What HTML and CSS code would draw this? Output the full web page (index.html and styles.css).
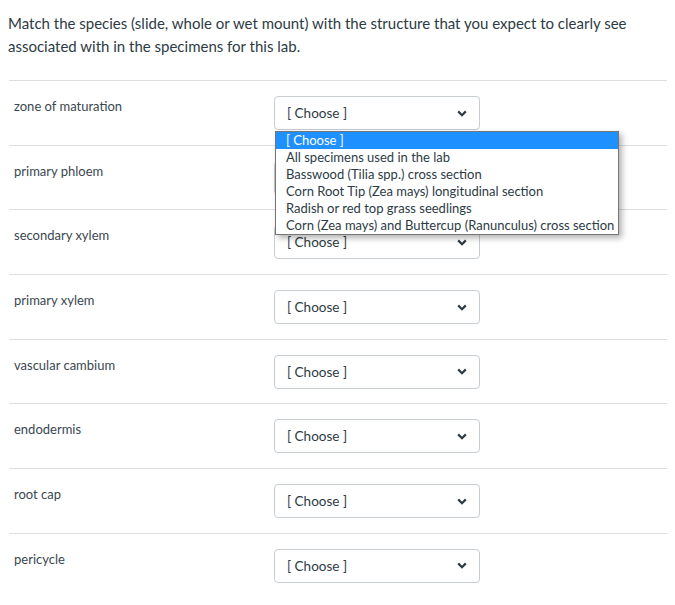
FILE: index.html
```html
<!DOCTYPE html>
<html>
    <head>
        <link rel="stylesheet" href="styles.css">
    </head>
    <body>
        <div class="question">
            <p class="question-text">
                Match the species (slide, whole or wet mount) with the structure that you expect to clearly see
                associated with in the specimens for this lab.
            </p>
            <div class="answers">
                <div class="answer-row">
                    <div class="answer-label">zone of maturation</div>
                    <div class="select-wrap">
                        <div class="select-box">
                            <span>[ Choose ]</span>
                            <svg class="chevron" width="10" height="7" viewBox="0 0 10 7">
                                <path d="M1.2 1.4 L5 5.2 L8.8 1.4" fill="none" stroke="#2d3b45" stroke-width="2.2" />
                            </svg>
                        </div>
                        <ul class="dropdown">
                            <li class="selected">[ Choose ]</li>
                            <li>All specimens used in the lab</li>
                            <li>Basswood (Tilia spp.) cross section</li>
                            <li>Corn Root Tip (Zea mays) longitudinal section</li>
                            <li>Radish or red top grass seedlings</li>
                            <li>Corn (Zea mays) and Buttercup (Ranunculus) cross section</li>
                        </ul>
                    </div>
                </div>
                <div class="answer-row">
                    <div class="answer-label">primary phloem</div>
                    <div class="select-wrap">
                        <div class="select-box">
                            <span>[ Choose ]</span>
                            <svg class="chevron" width="10" height="7" viewBox="0 0 10 7">
                                <path d="M1.2 1.4 L5 5.2 L8.8 1.4" fill="none" stroke="#2d3b45" stroke-width="2.2" />
                            </svg>
                        </div>
                    </div>
                </div>
                <div class="answer-row">
                    <div class="answer-label">secondary xylem</div>
                    <div class="select-wrap">
                        <div class="select-box">
                            <span>[ Choose ]</span>
                            <svg class="chevron" width="10" height="7" viewBox="0 0 10 7">
                                <path d="M1.2 1.4 L5 5.2 L8.8 1.4" fill="none" stroke="#2d3b45" stroke-width="2.2" />
                            </svg>
                        </div>
                    </div>
                </div>
                <div class="answer-row">
                    <div class="answer-label">primary xylem</div>
                    <div class="select-wrap">
                        <div class="select-box">
                            <span>[ Choose ]</span>
                            <svg class="chevron" width="10" height="7" viewBox="0 0 10 7">
                                <path d="M1.2 1.4 L5 5.2 L8.8 1.4" fill="none" stroke="#2d3b45" stroke-width="2.2" />
                            </svg>
                        </div>
                    </div>
                </div>
                <div class="answer-row">
                    <div class="answer-label">vascular cambium</div>
                    <div class="select-wrap">
                        <div class="select-box">
                            <span>[ Choose ]</span>
                            <svg class="chevron" width="10" height="7" viewBox="0 0 10 7">
                                <path d="M1.2 1.4 L5 5.2 L8.8 1.4" fill="none" stroke="#2d3b45" stroke-width="2.2" />
                            </svg>
                        </div>
                    </div>
                </div>
                <div class="answer-row">
                    <div class="answer-label">endodermis</div>
                    <div class="select-wrap">
                        <div class="select-box">
                            <span>[ Choose ]</span>
                            <svg class="chevron" width="10" height="7" viewBox="0 0 10 7">
                                <path d="M1.2 1.4 L5 5.2 L8.8 1.4" fill="none" stroke="#2d3b45" stroke-width="2.2" />
                            </svg>
                        </div>
                    </div>
                </div>
                <div class="answer-row">
                    <div class="answer-label">root cap</div>
                    <div class="select-wrap">
                        <div class="select-box">
                            <span>[ Choose ]</span>
                            <svg class="chevron" width="10" height="7" viewBox="0 0 10 7">
                                <path d="M1.2 1.4 L5 5.2 L8.8 1.4" fill="none" stroke="#2d3b45" stroke-width="2.2" />
                            </svg>
                        </div>
                    </div>
                </div>
                <div class="answer-row">
                    <div class="answer-label">pericycle</div>
                    <div class="select-wrap">
                        <div class="select-box">
                            <span>[ Choose ]</span>
                            <svg class="chevron" width="10" height="7" viewBox="0 0 10 7">
                                <path d="M1.2 1.4 L5 5.2 L8.8 1.4" fill="none" stroke="#2d3b45" stroke-width="2.2" />
                            </svg>
                        </div>
                    </div>
                </div>
            </div>
        </div>
    </body>
</html>
```

FILE: styles.css
```css
* {
    margin: 0;
    padding: 0;
    box-sizing: border-box;
    font-family: Lato, 'Helvetica Neue', Arial, sans-serif;
}

body {
    margin: 8px;
    background: #fff;
    color: #2d3b45;
    overflow: hidden;
}

.question-text {
    margin-top: 4px;
    font-size: 15px;
    line-height: 23px;
    margin-bottom: 22px;
}

.answers {
    width: 661px;
    padding-left: 1px;
}

.answer-row {
    display: flex;
    height: 64.7px;
    padding-top: 15px;
    border-top: 1px solid #dcdfe1;
}

.answer-label {
    width: 265px;
    padding-left: 5px;
    font-size: 13px;
    line-height: 20px;
    color: #3a4750;
}

.select-wrap {
    position: relative;
}

.select-box {
    display: flex;
    align-items: center;
    justify-content: space-between;
    width: 206px;
    height: 34px;
    padding: 0 12px 0 12px;
    border: 1px solid #c7cdd1;
    border-radius: 4px;
    font-size: 13.5px;
    background: #fff;
}

.chevron {
    display: block;
}

.dropdown {
    position: absolute;
    top: 35px;
    left: 1px;
    width: 344px;
    list-style: none;
    background: #fff;
    border: 1px solid #767676;
    box-shadow: 3px 3px 6px rgba(0, 0, 0, 0.3);
    z-index: 2;
}

.dropdown li {
    height: 17px;
    line-height: 17px;
    padding-left: 10px;
    font-size: 13px;
    color: #2d3b45;
    white-space: nowrap;
}

.dropdown li.selected {
    background: #1e90ff;
    color: #fff;
}
```
